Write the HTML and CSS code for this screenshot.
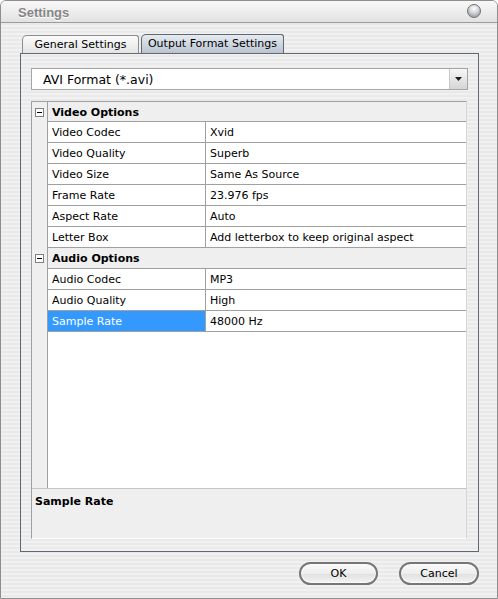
FILE: index.html
```html
<!DOCTYPE html>
<html lang="en">
<head>
    <meta charset="UTF-8">
    <title>Settings</title>
    <link rel="stylesheet" href="styles.css">
</head>
<body>
    <div class="window">
        <!-- Title bar -->
        <div class="titlebar">
            <span class="title">Settings</span>
            <span class="close"></span>
        </div>

        <div class="main">
            <!-- Tabs -->
            <div class="tabs">
                <div class="tab">General Settings</div>
                <div class="tab active">Output Format Settings</div>
            </div>

            <div class="panel">
                <!-- Format combo -->
                <div class="combo">
                    <span class="combo-text">AVI Format (*.avi)</span>
                    <span class="combo-btn">
                        <svg width="8" height="5" viewBox="0 0 8 5"><path d="M0 0h7L3.5 4z" fill="#1e1e1e"/></svg>
                    </span>
                </div>

                <!-- Property grid -->
                <div class="grid">
                    <div class="row cat first">
                        <span class="gutter"><span class="toggle"></span></span>
                        <span class="cat-name">Video Options</span>
                    </div>
                    <div class="row"><span class="gutter"></span><span class="name">Video Codec</span><span class="value">Xvid</span></div>
                    <div class="row"><span class="gutter"></span><span class="name">Video Quality</span><span class="value">Superb</span></div>
                    <div class="row"><span class="gutter"></span><span class="name">Video Size</span><span class="value">Same As Source</span></div>
                    <div class="row"><span class="gutter"></span><span class="name">Frame Rate</span><span class="value">23.976 fps</span></div>
                    <div class="row"><span class="gutter"></span><span class="name">Aspect Rate</span><span class="value">Auto</span></div>
                    <div class="row"><span class="gutter"></span><span class="name">Letter Box</span><span class="value">Add letterbox to keep original aspect</span></div>
                    <div class="row cat">
                        <span class="gutter"><span class="toggle"></span></span>
                        <span class="cat-name">Audio Options</span>
                    </div>
                    <div class="row"><span class="gutter"></span><span class="name">Audio Codec</span><span class="value">MP3</span></div>
                    <div class="row"><span class="gutter"></span><span class="name">Audio Quality</span><span class="value">High</span></div>
                    <div class="row"><span class="gutter"></span><span class="name selected">Sample Rate</span><span class="value">48000 Hz</span></div>
                    <div class="filler"><span class="gutter"></span><span class="filler-body"></span></div>
                    <div class="desc">Sample Rate</div>
                </div>
            </div>

            <!-- Dialog buttons -->
            <div class="buttons">
                <button class="btn">OK</button>
                <button class="btn">Cancel</button>
            </div>
        </div>
    </div>
</body>
</html>
```

FILE: styles.css
```css
/* General Styling */
* {
    box-sizing: border-box;
}

body {
    margin: 0;
    font-family: "DejaVu Sans", sans-serif;
    font-size: 11px;
    color: #000;
    background: #fff;
}

.window {
    width: 498px;
    height: 599px;
    border: 1px solid #8e8e8e;
    border-radius: 6px 6px 0 0;
    overflow: hidden;
    display: flex;
    flex-direction: column;
    background: repeating-linear-gradient(to bottom, #f1f1f1 0, #f1f1f1 2px, #e9e9e9 2px, #e9e9e9 4px);
}

/* Title bar */
.titlebar {
    flex: none;
    height: 22px;
    display: flex;
    align-items: center;
    justify-content: space-between;
    padding: 1px 16px 0 17px;
    background: linear-gradient(#f8f8f8, #e2e2e2);
    border-bottom: 1px solid #9c9c9c;
}

.title {
    font-family: "Liberation Sans", Arial, sans-serif;
    font-weight: bold;
    font-size: 13px;
    color: #868686;
    text-shadow: 0 1px 0 #fff;
}

.close {
    width: 14px;
    height: 14px;
    margin-top: -2px;
    border-radius: 50%;
    border: 1px solid #6e6e6e;
    background: radial-gradient(circle at 50% 30%, #ffffff 0, #d6d9dd 40%, #a3a8ae 75%, #c9ccd0 100%);
}

.main {
    flex: 1;
    display: flex;
    flex-direction: column;
    padding: 11px 18px 0 19px;
}

/* Tabs */
.tabs {
    display: flex;
    align-items: flex-end;
    gap: 2px;
    height: 19px;
    padding-left: 2px;
}

.tab {
    width: 117px;
    height: 18px;
    line-height: 17px;
    text-align: center;
    border: 1px solid #8d8d8d;
    border-bottom: none;
    border-radius: 5px 3px 0 0;
    background: linear-gradient(#fbfbfb, #e4e4e4);
}

.tab.active {
    width: 143px;
    height: 19px;
    line-height: 18px;
    border-color: #5e6874;
    background: linear-gradient(#e6ebf1, #b9c3cf);
}

/* Panel */
.panel {
    height: 499px;
    border: 1px solid #5f6873;
    padding: 14px 10px 12px 10px;
    display: flex;
    flex-direction: column;
}

.combo {
    height: 22px;
    border: 1px solid #a6a6a6;
    background: #fff;
    display: flex;
    align-items: center;
}

.combo-text {
    flex: 1;
    padding-left: 11px;
    font-size: 12.5px;
}

.combo-btn {
    width: 18px;
    height: 100%;
    border-left: 1px solid #c8c8c8;
    background: linear-gradient(#f7f7f7, #d5d5d5);
    display: flex;
    align-items: center;
    justify-content: center;
}

/* Property grid */
.grid {
    height: 438px;
    margin-top: 11px;
    margin-right: 1px;
    border: 1px solid;
    border-color: #a0a0a0 #d6d6d6 #fdfdfd #a0a0a0;
    background: #fff;
    display: flex;
    flex-direction: column;
}

.row {
    display: flex;
    height: 21px;
    flex: none;
}

.row.first {
    height: 20px;
}

.gutter {
    width: 15px;
    flex: none;
    background: #efefef;
    display: flex;
    align-items: center;
    justify-content: center;
}

.toggle {
    position: relative;
    width: 9px;
    height: 9px;
    margin-left: -1px;
    border: 1px solid #808080;
    background: #fff;
}

.toggle::after {
    content: "";
    position: absolute;
    left: 1px;
    top: 3px;
    width: 5px;
    height: 1px;
    background: #000;
}

.name,
.value,
.cat-name {
    line-height: 20px;
    padding: 1px 0 0 4px;
    border-bottom: 1px solid #a0a0a0;
    white-space: nowrap;
}

.name {
    width: 159px;
    border-left: 1px solid #a0a0a0;
    border-right: 1px solid #a0a0a0;
}

.name.selected {
    background: #3399ff;
    color: #fff;
}

.value {
    flex: 1;
}

.cat-name {
    flex: 1;
    font-weight: bold;
    background: #efefef;
    border-left: 1px solid #a0a0a0;
}

.row.first .cat-name {
    line-height: 19px;
}

.filler {
    flex: 1;
    display: flex;
}

.filler-body {
    flex: 1;
    border-left: 1px solid #a0a0a0;
}

.desc {
    height: 50px;
    flex: none;
    padding: 6px 3px;
    font-weight: bold;
    background: #efefef;
    border-top: 1px solid #c4c4c4;
}

/* Buttons */
.buttons {
    display: flex;
    justify-content: flex-end;
    gap: 21px;
    margin-top: 10px;
}

.btn {
    width: 79px;
    height: 23px;
    padding: 0;
    font-family: "DejaVu Sans", sans-serif;
    font-size: 11px;
    color: #000;
    border: 2px solid #767676;
    border-radius: 12px;
    box-shadow: inset 0 0 0 1px #fbfbfb;
    background: linear-gradient(#fafafa, #eeeeee 50%, #e0e0e0 51%, #f3f3f3);
}

.btn + .btn {
    width: 80px;
}
```
